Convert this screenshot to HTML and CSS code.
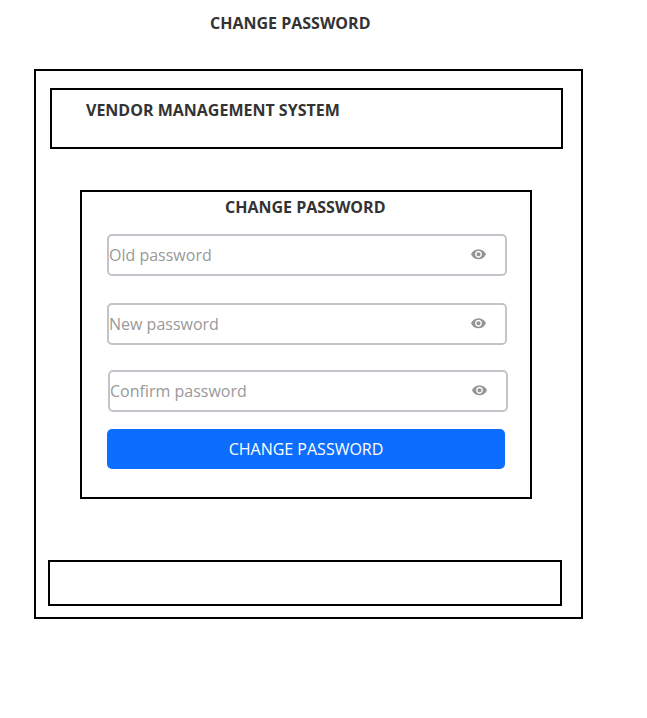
FILE: index.html
```html
<!DOCTYPE html>
<html lang="en">
<head>
<meta charset="utf-8">
<title>Change Password</title>
<link rel="stylesheet" href="styles.css">
</head>
<body>
<h1 class="page-title">CHANGE PASSWORD</h1>
<main class="frame">
  <header class="banner">VENDOR MANAGEMENT SYSTEM</header>
  <form class="card">
    <h2 class="card-title">CHANGE PASSWORD</h2>
    <div class="field">
      <span>Old password</span>
      <svg class="eye" viewBox="1 4.5 22 15"><path d="M12 4.5C7 4.5 2.73 7.61 1 12c1.73 4.39 6 7.5 11 7.5s9.27-3.11 11-7.5c-1.73-4.39-6-7.5-11-7.5zM12 17c-2.76 0-5-2.24-5-5s2.24-5 5-5 5 2.24 5 5-2.24 5-5 5zm0-8c-1.66 0-3 1.34-3 3s1.34 3 3 3 3-1.34 3-3-1.34-3-3-3z"/></svg>
    </div>
    <div class="field field-new">
      <span>New password</span>
      <svg class="eye" viewBox="1 4.5 22 15"><path d="M12 4.5C7 4.5 2.73 7.61 1 12c1.73 4.39 6 7.5 11 7.5s9.27-3.11 11-7.5c-1.73-4.39-6-7.5-11-7.5zM12 17c-2.76 0-5-2.24-5-5s2.24-5 5-5 5 2.24 5 5-2.24 5-5 5zm0-8c-1.66 0-3 1.34-3 3s1.34 3 3 3 3-1.34 3-3-1.34-3-3-3z"/></svg>
    </div>
    <div class="field field-confirm">
      <span>Confirm password</span>
      <svg class="eye" viewBox="1 4.5 22 15"><path d="M12 4.5C7 4.5 2.73 7.61 1 12c1.73 4.39 6 7.5 11 7.5s9.27-3.11 11-7.5c-1.73-4.39-6-7.5-11-7.5zM12 17c-2.76 0-5-2.24-5-5s2.24-5 5-5 5 2.24 5 5-2.24 5-5 5zm0-8c-1.66 0-3 1.34-3 3s1.34 3 3 3 3-1.34 3-3-1.34-3-3-3z"/></svg>
    </div>
    <button class="submit" type="button">CHANGE PASSWORD</button>
  </form>
  <footer class="footer"></footer>
</main>
</body>
</html>
```
FILE: styles.css
```css
* {
  box-sizing: border-box;
}

body {
  margin: 0;
  padding-top: 12px;
  background: #fff;
  color: #333;
  font: 16px/22px "Open Sans", sans-serif;
}

.page-title,
.card-title {
  margin: 0;
  font-size: 16px;
  font-weight: 700;
}

.page-title {
  padding-left: 210px;
}

.frame {
  width: 549px;
  height: 550px;
  margin: 35px 0 0 34px;
  padding: 17px 0 0 12px;
  border: 2px solid #000;
}

.banner {
  width: 513px;
  height: 61px;
  margin-left: 2px;
  padding: 9px 0 0 34px;
  border: 2px solid #000;
  font-weight: 700;
}

.card {
  width: 452px;
  height: 309px;
  margin: 41px 0 0 32px;
  padding: 4px 0 0 25px;
  border: 2px solid #000;
}

.card-title {
  padding-left: 118px;
}

.field {
  display: flex;
  align-items: center;
  justify-content: space-between;
  width: 400px;
  height: 42px;
  margin-top: 16px;
  padding-right: 19px;
  border: 2px solid #c4c3ca;
  border-radius: 5px;
  color: #999;
}

.field-new {
  margin-top: 27px;
}

.field-confirm {
  margin: 25px 0 0 1px;
}

.eye {
  width: 15px;
  height: 10.5px;
  margin-bottom: 1.5px;
  fill: #949494;
}

.submit {
  display: block;
  width: 398px;
  height: 40px;
  margin-top: 17px;
  padding: 0;
  border: 0;
  border-radius: 5px;
  background: #0d6efd;
  color: #fff;
  font: inherit;
}

.footer {
  width: 514px;
  height: 46px;
  margin-top: 61px;
  border: 2px solid #000;
}
```
